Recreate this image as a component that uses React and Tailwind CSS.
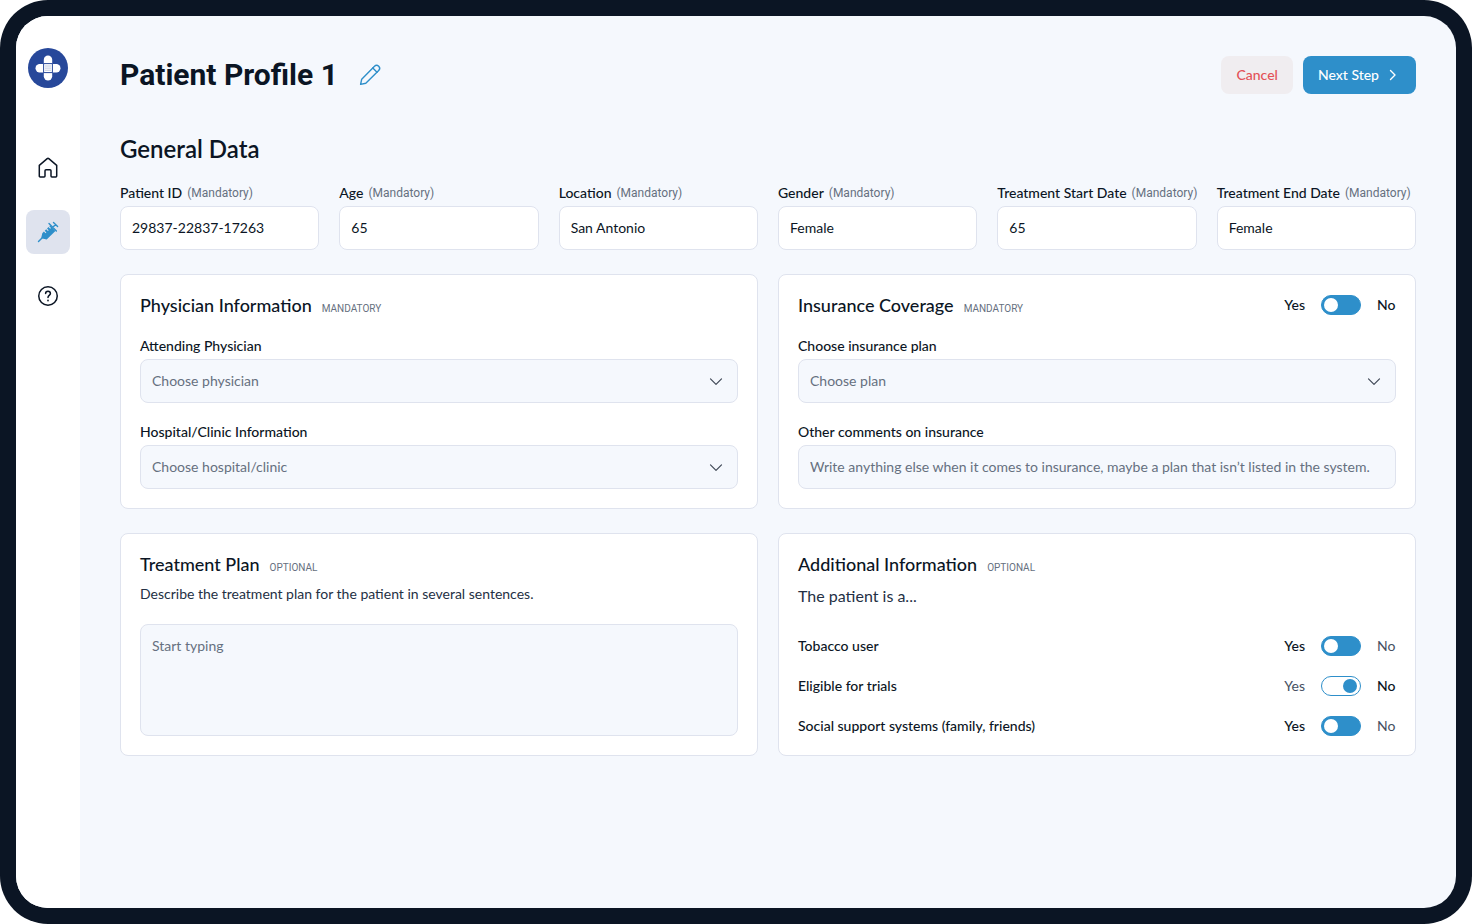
import { useState } from "react";

const GENERAL = [
  ["Patient ID", "29837-22837-17263"],
  ["Age", "65"],
  ["Location", "San Antonio"],
  ["Gender", "Female"],
  ["Treatment Start Date", "65"],
  ["Treatment End Date", "Female"],
];

function Logo() {
  return (
    <svg viewBox="0 0 40 40" className="size-10" role="img" aria-label="Clinic">
      <circle cx="20" cy="20" r="20" fill="#27489a" />
      <rect x="7.5" y="16" width="25" height="8.5" rx="4.2" fill="#fff" />
      <rect x="15.8" y="7.5" width="8.4" height="25" rx="4.2" fill="#fff" />
      <rect x="15.6" y="15.6" width="8.8" height="9" fill="#fff" stroke="#27489a" strokeWidth="1" />
      <path d="M17.5 18h6M17.5 20.1h6M17.5 22.2h6" stroke="#27489a" strokeWidth="1" strokeDasharray="1 1" opacity=".6" />
    </svg>
  );
}

function HomeIcon() {
  return (
    <svg viewBox="0 0 24 24" className="size-6" fill="none" stroke="#0b1524" strokeWidth="1.5" strokeLinecap="round" strokeLinejoin="round" aria-hidden="true">
      <path d="M3.300 9.300 11.200 2.700a1.300 1.300 0 0 1 1.600 0l7.900 6.600v10.800a.9.9 0 0 1-.9.9h-3.900a.9.9 0 0 1-.9-.9v-5.400a1 1 0 0 0-1-1h-4a1 1 0 0 0-1 1v5.400a.9.9 0 0 1-.9.9H4.200a.9.9 0 0 1-.9-.9z" />
    </svg>
  );
}

function SyringeIcon() {
  return (
    <svg viewBox="0 0 24 24" className="size-6" fill="none" stroke="#2e8fca" aria-hidden="true">
      <path d="M2.500 21.500 7 17" strokeWidth="1.4" strokeLinecap="round" />
      <path d="m6.300 18.600-1-1 1-4.400 1.600-1.600 1.700 1.700.8-.8-1.700-1.700 1.500-1.500 1.700 1.700.8-.8L11 8.500l1.500-1.500 1.700 1.700.8-.8-1.700-1.700.9-.9 5.200 5.600-8.700 8.700z" fill="#2e8fca" stroke="none" />
      <path d="m13 3.600 7.400 7.400M16.800 7.200l2.800-2.800M17.500 2.400l4.100 4.100" strokeWidth="1.400" strokeLinecap="round" />
    </svg>
  );
}

function HelpIcon() {
  return (
    <svg viewBox="0 0 24 24" className="size-6" fill="none" stroke="#0b1524" strokeWidth="1.5" strokeLinecap="round" strokeLinejoin="round" aria-hidden="true">
      <circle cx="12" cy="12" r="9.25" />
      <path d="M9.600 9.600a2.400 2.400 0 0 1 4.800 0c0 1.700-2.400 2-2.400 3.800" />
      <path d="M12 16.400v.2" strokeWidth="1.7" />
    </svg>
  );
}

function PencilIcon() {
  return (
    <svg viewBox="0 0 24 24" className="size-6" fill="none" stroke="#2e8fca" strokeWidth="1.4" strokeLinecap="round" strokeLinejoin="round" aria-hidden="true">
      <path d="M2.600 21.400 3.700 16.200 16.500 3.300a2.900 2.900 0 0 1 4.200 4.200L7.800 20.300z" />
      <path d="m14.800 5 4.200 4.200" />
    </svg>
  );
}

function Chevron() {
  return (
    <svg viewBox="0 0 16 16" className="pointer-events-none col-start-1 row-start-1 mr-[14px] size-4 self-center justify-self-end" fill="none" stroke="#3f4856" strokeWidth="1.2" strokeLinecap="round" strokeLinejoin="round" aria-hidden="true">
      <path d="m2.500 5.800 5.500 5.500 5.500-5.500" />
    </svg>
  );
}

function Card({ title, badge, action, children }) {
  return (
    <section className="rounded-lg border border-[#dfe3ee] bg-white px-[19px] pt-[18px] pb-[19px]">
      <div className="flex items-center justify-between">
        <h3 className="flex items-baseline gap-[10px] text-lg leading-6 font-medium">
          {title}
          <span className="font-[Roboto] text-[10px] leading-none font-normal text-[#667080] uppercase">{badge}</span>
        </h3>
        {action}
      </div>
      {children}
    </section>
  );
}

function SelectField({ id, label, placeholder }) {
  return (
    <div className="mt-[19px]">
      <label htmlFor={id} className="block text-sm leading-5 font-medium">{label}</label>
      <div className="mt-[3px] grid">
        <select id={id} className="col-start-1 row-start-1 h-11 w-full appearance-none rounded-lg border border-[#dfe3ee] bg-[#f5f8fd] pr-10 pl-[11px] text-sm text-[#667080]">
          <option>{placeholder}</option>
        </select>
        <Chevron />
      </div>
    </div>
  );
}

function Toggle({ label, initial, both }) {
  const [yes, setYes] = useState(initial);
  const on = "font-medium text-[#0b1524]";
  const off = "text-[#465062]";
  return (
    <label className="flex cursor-pointer items-center gap-4 text-sm leading-5">
      <span className={yes || both ? on : off}>Yes</span>
      <input type="checkbox" role="switch" aria-label={label} checked={yes} onChange={() => setYes(!yes)} className="peer sr-only" />
      <span className={"flex h-5 w-10 items-center rounded-full border border-[#2e8fca] pr-[3px] pl-[2px] " + (yes ? "bg-[#2e8fca]" : "justify-end bg-white")}>
        <span className={"size-[14px] rounded-full " + (yes ? "bg-white" : "bg-[#2e8fca]")} />
      </span>
      <span className={"min-w-[19px] " + (!yes || both ? on : off)}>No</span>
    </label>
  );
}

export default function App() {
  return (
    <div className="min-h-screen bg-white font-[Lato,sans-serif] text-[#0b1524]">
      <div className="flex min-h-screen rounded-[48px] bg-[#0b1524] p-4">
        <div className="flex flex-1 overflow-hidden rounded-[32px] bg-[#f5f8fd]">
          <nav className="flex w-16 shrink-0 flex-col items-center bg-white pt-8" aria-label="Main">
            <Logo />
            <div className="mt-[58px] flex flex-col gap-5">
              <a href="#home" aria-label="Home" className="flex size-11 items-center justify-center rounded-lg"><HomeIcon /></a>
              <a href="#treatment" aria-label="Treatment" className="flex size-11 items-center justify-center rounded-lg bg-[#dfe3ee]"><SyringeIcon /></a>
              <a href="#help" aria-label="Help" className="flex size-11 items-center justify-center rounded-lg"><HelpIcon /></a>
            </div>
          </nav>
          <main className="min-w-0 flex-1 p-10">
            <header className="flex items-center justify-between">
              <div className="flex items-center gap-5">
                <h1 className="font-[Roboto] text-[30px] leading-9 font-bold">Patient Profile 1</h1>
                <button type="button" aria-label="Edit name"><PencilIcon /></button>
              </div>
              <div className="flex gap-[10px] text-sm font-medium">
                <button type="button" className="h-[38px] rounded-lg bg-[#f0edf0] px-[15px] text-[#e35258]">Cancel</button>
                <button type="button" className="flex h-[38px] items-center gap-[6px] rounded-lg bg-[#2e8fca] px-[15px] text-white">
                  Next Step
                  <svg viewBox="0 0 16 16" className="size-4" fill="none" stroke="currentColor" strokeWidth="1.4" strokeLinecap="round" strokeLinejoin="round" aria-hidden="true">
                    <path d="m5.500 3.500 4.500 4.500-4.500 4.500" />
                  </svg>
                </button>
              </div>
            </header>

            <h2 className="mt-[39px] text-2xl leading-8 font-semibold">General Data</h2>
            <div className="mt-[18px] grid grid-cols-6 gap-5">
              {GENERAL.map(([label, value], i) => (
                <div key={label} className="min-w-0">
                  <label htmlFor={"general-" + i} className="flex items-center gap-[5px] text-sm leading-5 font-medium whitespace-nowrap">
                    {label}
                    <span className="font-[Roboto] text-xs leading-5 font-normal text-[#667080]">(Mandatory)</span>
                  </label>
                  <input id={"general-" + i} defaultValue={value} className="mt-[3px] block h-11 w-full rounded-lg border border-[#dfe3ee] bg-white px-[11px] pb-[2px] text-sm" />
                </div>
              ))}
            </div>

            <div className="mt-6 grid grid-cols-2 gap-x-5 gap-y-6">
              <Card title="Physician Information" badge="Mandatory">
                <SelectField id="physician" label="Attending Physician" placeholder="Choose physician" />
                <SelectField id="clinic" label="Hospital/Clinic Information" placeholder="Choose hospital/clinic" />
              </Card>

              <Card title="Insurance Coverage" badge="Mandatory" action={<Toggle label="Insurance coverage" initial both />}>
                <SelectField id="plan" label="Choose insurance plan" placeholder="Choose plan" />
                <div className="mt-[19px]">
                  <label htmlFor="comments" className="block text-sm leading-5 font-medium">Other comments on insurance</label>
                  <input id="comments" placeholder="Write anything else when it comes to insurance, maybe a plan that isn’t listed in the system." className="mt-[3px] block h-11 w-full rounded-lg border border-[#dfe3ee] bg-[#f5f8fd] px-[11px] pb-[2px] text-sm placeholder:text-[#667080]" />
                </div>
              </Card>

              <Card title="Treatment Plan" badge="Optional">
                <label htmlFor="treatment-plan" className="mt-2 block text-sm leading-5 text-[#243044]">Describe the treatment plan for the patient in several sentences.</label>
                <textarea id="treatment-plan" placeholder="Start typing" className="mt-5 block h-28 w-full resize-none rounded-lg border border-[#dfe3ee] bg-[#f5f8fd] px-[11px] py-[11px] text-sm leading-5 placeholder:text-[#667080]" />
              </Card>

              <Card title="Additional Information" badge="Optional">
                <p className="mt-2 text-base leading-6 text-[#243044]">The patient is a...</p>
                <div className="mt-7 flex flex-col gap-5 text-sm leading-5 font-medium">
                  {[["Tobacco user", true], ["Eligible for trials", false], ["Social support systems (family, friends)", true]].map(([label, yes]) => (
                    <div key={label} className="flex items-center justify-between">
                      <span>{label}</span>
                      <div className="font-normal"><Toggle label={label} initial={yes} /></div>
                    </div>
                  ))}
                </div>
              </Card>
            </div>
          </main>
        </div>
      </div>
    </div>
  );
}
